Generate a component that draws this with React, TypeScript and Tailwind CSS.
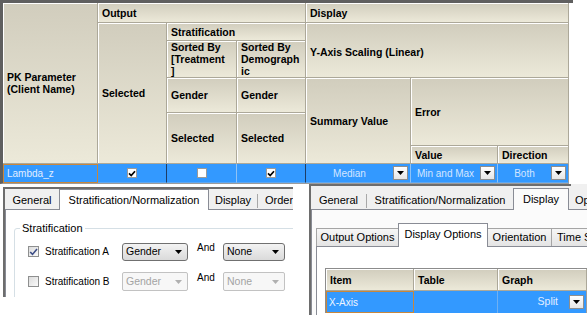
import React from "react";

const head =
    "bg-linear-to-b from-[#d1cdbd] to-[#ece9d9] border-r border-b border-[#aca899] shadow-[inset_1px_1px_0_#ffffff] flex items-center pl-[4px] text-[10.5px] font-bold leading-[12px] text-black";
const blue = "bg-[#3399ff] border-b border-[#5ea8f2] flex items-center";

const DropButton: React.FC = () => (
    <span className="w-[15px] h-[14px] shrink-0 bg-linear-to-b from-white to-[#e6e6e6] border border-[#8e8e8e] flex items-center justify-center">
        <svg width="7" height="4" viewBox="0 0 7 4">
            <path d="M0 0h7L3.5 4z" fill="#000" />
        </svg>
    </span>
);

const GridCheck: React.FC<{ checked?: boolean }> = ({ checked }) => (
    <span className="w-[10px] h-[10px] bg-white border border-[#9a9a9a] flex items-center justify-center">
        {checked && (
            <svg width="8" height="7" viewBox="0 0 8 7">
                <path d="M1 3.4l2.2 2.2L7 1.2" stroke="#000" strokeWidth="1.7" fill="none" />
            </svg>
        )}
    </span>
);

const GridCombo: React.FC<{ text: string; edge: string }> = ({ text, edge }) => (
    <div className={`${blue} ${edge} pr-[2px]`}>
        <span className="flex-1 text-center text-[10px] text-[#d3e6ff]">{text}</span>
        <DropButton />
    </div>
);

const TopGrid: React.FC = () => (
    <div className="w-[573px] border-t-[3px] border-[#5f5f5f]">
        <div className="w-[569px] border-l-[3px] border-l-[#5f5f5f] border-b border-b-[#9c9c9c] grid grid-cols-[95px_69px_70px_69px_105px_87px_71px] grid-rows-[20px_18px_37px_35px_33px_18px_19px]">
            <div className={`${head} col-start-1 row-start-1 row-span-6`}>
                PK Parameter
                <br />
                (Client Name)
            </div>
            <div className={`${head} col-start-2 col-span-3 row-start-1`}>Output</div>
            <div className={`${head} col-start-5 col-span-3 row-start-1`}>Display</div>
            <div className={`${head} col-start-2 row-start-2 row-span-5`}>Selected</div>
            <div className={`${head} col-start-3 col-span-2 row-start-2`}>Stratification</div>
            <div className={`${head} col-start-5 col-span-3 row-start-2 row-span-2 pt-[3px]`}>Y-Axis Scaling (Linear)</div>
            <div className={`${head} col-start-3 row-start-3`}>
                Sorted By
                <br />
                [Treatment
                <br />]
            </div>
            <div className={`${head} col-start-4 row-start-3`}>
                Sorted By
                <br />
                Demograph
                <br />
                ic
            </div>
            <div className={`${head} col-start-3 row-start-4`}>Gender</div>
            <div className={`${head} col-start-4 row-start-4`}>Gender</div>
            <div className={`${head} col-start-5 row-start-4 row-span-3`}>Summary Value</div>
            <div className={`${head} col-start-6 col-span-2 row-start-4 row-span-2`}>Error</div>
            <div className={`${head} col-start-3 row-start-5 row-span-2`}>Selected</div>
            <div className={`${head} col-start-4 row-start-5 row-span-2`}>Selected</div>
            <div className={`${head} col-start-6 row-start-6`}>Value</div>
            <div className={`${head} col-start-7 row-start-6`}>Direction</div>

            <div className="col-start-1 row-start-7 bg-[#3399ff] border border-[#c8873c] flex items-center pl-[3px] text-[10px] text-[#e2eeff]">
                Lambda_z
            </div>
            <div className={`${blue} col-start-2 row-start-7 border-r border-r-[#1d3d66] justify-center`}>
                <GridCheck checked />
            </div>
            <div className={`${blue} col-start-3 row-start-7 border-r border-r-[#8fc2f5] justify-center`}>
                <GridCheck />
            </div>
            <div className={`${blue} col-start-4 row-start-7 border-r border-r-[#1d3d66] justify-center`}>
                <GridCheck checked />
            </div>
            <GridCombo text="Median" edge="col-start-5 row-start-7 border-r border-r-[#8fc2f5]" />
            <GridCombo text="Min and Max" edge="col-start-6 row-start-7 border-r border-r-[#8fc2f5]" />
            <GridCombo text="Both" edge="col-start-7 row-start-7 border-r border-r-[#9c9c9c]" />
        </div>
    </div>
);

const WinCheck: React.FC<{ checked?: boolean }> = ({ checked }) => (
    <span className="w-[11px] h-[11px] shrink-0 border border-[#8e8f8f] bg-linear-to-br from-[#dcdcdc] to-[#fafafa] flex items-center justify-center">
        {checked && (
            <svg width="9" height="8" viewBox="0 0 9 8">
                <path d="M1.2 4l2.3 2.4L8 1" stroke="#3c4d86" strokeWidth="1.6" fill="none" />
            </svg>
        )}
    </span>
);

const WinCombo: React.FC<{ text: string; width: string; disabled?: boolean }> = ({ text, width, disabled }) => (
    <div
        className={
            disabled
                ? `${width} h-[19px] shrink-0 rounded-[2px] border border-[#c2c2c2] bg-[#f7f7f7] flex items-center pl-[3px] pr-[5px] text-[10.5px] text-[#a3a3a3]`
                : `${width} h-[18px] shrink-0 rounded-[3px] border border-[#707070] bg-linear-to-b from-[#f3f3f3] to-[#dadada] flex items-center pl-[3px] pr-[5px] text-[10.5px] text-black`
        }
    >
        <span className="flex-1">{text}</span>
        <svg width="7" height="4" viewBox="0 0 7 4">
            <path d="M0 0h7L3.5 4z" fill={disabled ? "#b0b0b0" : "#000"} />
        </svg>
    </div>
);

const StratRow: React.FC<{ label: string; checked?: boolean; disabled?: boolean }> = ({ label, checked, disabled }) => (
    <div className="h-[19px] flex items-center text-[10px] text-black">
        <WinCheck checked={checked} />
        <span className="ml-[6px] w-[77px] shrink-0">{label}</span>
        <WinCombo text="Gender" width="w-[66px]" disabled={disabled} />
        <span className="ml-[9px] w-[26px] shrink-0 mb-[8px]">And</span>
        <WinCombo text="None" width="w-[62px]" disabled={disabled} />
    </div>
);

const LeftPanel: React.FC = () => (
    <div className="ml-[3px] mt-[3px] w-[290px] h-[110px] shrink-0 border-t-2 border-l-2 border-[#6d6d6d] bg-[#f0f0f0] flex flex-col overflow-hidden text-black">
        <div className="h-[20px] shrink-0 flex items-end text-[11px] whitespace-nowrap">
            <div className="w-[54px] h-[17px] shrink-0 flex items-center justify-center">General</div>
            <div className="relative z-10 w-[150px] h-[21px] shrink-0 -mb-px bg-white border border-b-0 border-[#898c95] flex items-center justify-center">
                Stratification/Normalization
            </div>
            <div className="w-[49px] h-[17px] shrink-0 flex items-center">
                <span className="flex-1 text-center">Display</span>
                <span className="w-px h-[14px] bg-[#a8a8a8]" />
            </div>
            <div className="h-[17px] shrink-0 pl-[7px] flex items-center">Order</div>
        </div>
        <div className="flex-1 bg-white border-t border-l border-[#898c95] pt-[12px] pl-[8px] overflow-hidden">
            <fieldset className="w-[300px] h-[90px] border border-[#d5dfe5] rounded-[3px]">
                <legend className="ml-[5px] px-[2px] text-[11px] leading-[13px]">Stratification</legend>
                <div className="pl-[13px] pt-[7px] flex flex-col gap-[11px]">
                    <StratRow label="Stratification A" checked />
                    <StratRow label="Stratification B" disabled />
                </div>
            </fieldset>
        </div>
    </div>
);

const RightPanel: React.FC = () => (
    <div className="ml-[16px] w-[278px] h-[131px] shrink-0 border-l-2 border-[#6d6d6d] bg-[#f0f0f0] flex flex-col overflow-hidden text-black">
        <div className="w-[260px] h-[2px] shrink-0 bg-[#6d6d6d]" />
        <div className="h-[23px] shrink-0 flex items-end text-[11px] whitespace-nowrap">
            <div className="w-[56px] h-[17px] shrink-0 flex items-center">
                <span className="flex-1 text-center">General</span>
                <span className="w-px h-[14px] bg-[#a8a8a8]" />
            </div>
            <div className="w-[146px] h-[17px] shrink-0 flex items-center justify-center">Stratification/Normalization</div>
            <div className="relative z-10 w-[56px] h-[22px] shrink-0 -mb-px bg-[#fbfbfb] border border-b-0 border-[#898c95] flex items-center justify-center">
                Display
            </div>
            <div className="h-[17px] shrink-0 pl-[6px] flex items-center">Options</div>
        </div>
        <div className="flex-1 bg-[#fbfbfb] border-t border-l border-[#898c95] pt-[13px] pl-[4px] flex flex-col">
            <div className="h-[23px] shrink-0 flex items-end text-[11px] whitespace-nowrap">
                <div className="w-[82px] h-[18px] shrink-0 border-t border-l border-[#a5a5a5] bg-linear-to-b from-[#f6f6f6] to-[#e4e4e4] flex items-center justify-center">
                    Output Options
                </div>
                <div className="relative z-10 w-[90px] h-[24px] shrink-0 -mb-px bg-white border border-b-0 border-[#898c95] flex items-center justify-center pb-[2px]">
                    Display Options
                </div>
                <div className="w-[64px] h-[18px] shrink-0 border-t border-r border-[#a5a5a5] bg-linear-to-b from-[#f6f6f6] to-[#e4e4e4] flex items-center justify-center">
                    Orientation
                </div>
                <div className="w-[60px] h-[18px] shrink-0 border-t border-[#a5a5a5] bg-linear-to-b from-[#f6f6f6] to-[#e4e4e4] flex items-center pl-[5px]">
                    Time Scale
                </div>
            </div>
            <div className="flex-1 bg-white border-t border-l border-[#898c95] pt-[21px] pl-[8px]">
                <div className="w-[262px] grid grid-cols-[88px_84px_89px] grid-rows-[22px_22px] border-t border-l border-[#8c8c8c]">
                    <div className={head}>Item</div>
                    <div className={head}>Table</div>
                    <div className={head}>Graph</div>
                    <div className="bg-[#3399ff] border border-[#c8873c] flex items-center pl-[2px] text-[10px] text-[#eef5ff]">X-Axis</div>
                    <div className="bg-[#3399ff] border-r border-[#6fb0f2]" />
                    <div className="bg-[#3399ff] border-r border-[#9c9c9c] flex items-center justify-end pr-[2px] text-[10.5px] text-[#e2eeff]">
                        <span className="mr-[11px]">Split</span>
                        <DropButton />
                    </div>
                </div>
            </div>
        </div>
    </div>
);

export default function App() {
    return (
        <div className="w-[587px] h-[315px] overflow-hidden bg-white font-['Liberation_Sans',Arial,sans-serif]">
            <TopGrid />
            <div className="flex items-start">
                <LeftPanel />
                <RightPanel />
            </div>
        </div>
    );
}
